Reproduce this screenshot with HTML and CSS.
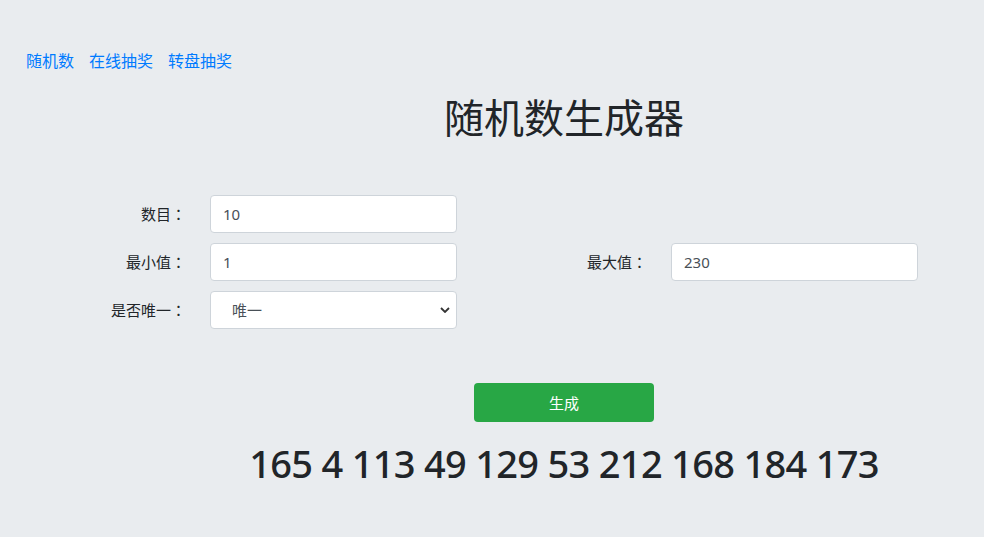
FILE: index.html
```html
<!DOCTYPE html>
<html>
<head>
    <meta charset="utf-8">
    <title>随机数生成器</title>
    <link rel="stylesheet" href="styles.css">
</head>
<body>
    <div class="nav">
        <a href="#">随机数</a>
        <a href="#">在线抽奖</a>
        <a href="#">转盘抽奖</a>
    </div>

    <div class="center-col">
        <h1 class="title">随机数生成器</h1>
    </div>

    <form class="gen-form">
        <label class="field-label">数目<span class="colon">：</span></label>
        <input class="field-input" type="text" value="10">
        <span></span><span></span>

        <label class="field-label">最小值<span class="colon">：</span></label>
        <input class="field-input" type="text" value="1">
        <label class="field-label">最大值<span class="colon">：</span></label>
        <input class="field-input" type="text" value="230">

        <label class="field-label">是否唯一<span class="colon">：</span></label>
        <select class="field-input field-select">
            <option>唯一</option>
            <option>不唯一</option>
        </select>
        <span></span><span></span>
    </form>

    <div class="center-col">
        <button class="btn-generate" type="button">生成</button>
        <div class="result">165 4 113 49 129 53 212 168 184 173</div>
    </div>
</body>
</html>
```

FILE: styles.css
```css
body {
    margin: 0;
    background: #e9ecef;
    color: #212529;
    font-family: "Noto Sans", "Noto Sans CJK SC", sans-serif;
}

.nav { padding: 49px 0 0 26px; display: flex; gap: 15px; }
.nav a { color: #007bff; text-decoration: none; font-size: 16px; line-height: 24px; }

.center-col { padding-left: 144px; text-align: center; }

.title {
    margin: 21px 0 0;
    font-size: 40px;
    font-weight: 400;
    line-height: 48px;
}

.gen-form {
    margin-top: 53px;
    display: grid;
    grid-template-columns: 186px 247px 166px 247px;
    column-gap: 24px;
    row-gap: 10px;
}

.field-label {
    font-size: 15px;
    line-height: 38px;
    text-align: right;
}

.colon { font-family: "Noto Sans CJK TC", sans-serif; }

.field-input {
    box-sizing: border-box;
    height: 38px;
    padding: 0 12px;
    border: 1px solid #ced4da;
    border-radius: 4px;
    background: #fff;
    color: #495057;
    font-family: inherit;
    font-size: 15px;
}

.field-select {
    -webkit-appearance: none;
    appearance: none;
    padding-left: 21px;
    background: #fff url("data:image/svg+xml;utf8,<svg xmlns='http://www.w3.org/2000/svg' width='10' height='6' viewBox='0 0 10 6'><path d='M1 1l4 4 4-4' fill='none' stroke='%23333' stroke-width='1.8'/></svg>") no-repeat right 6px center;
}

.btn-generate {
    margin-top: 54px;
    width: 180px;
    height: 39px;
    border: none;
    border-radius: 4px;
    background: #28a745;
    color: #fff;
    font-family: inherit;
    font-size: 15px;
}

.result {
    margin-top: 20px;
    font-size: 38px;
    font-weight: 500;
    line-height: 43px;
    letter-spacing: -0.7px;
}
```
